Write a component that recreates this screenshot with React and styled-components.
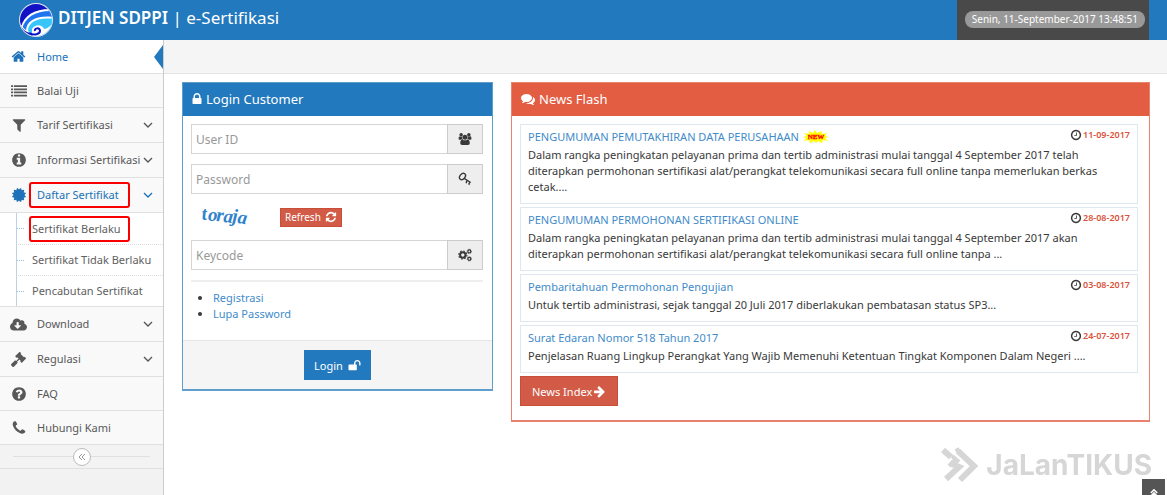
import React from 'react';
import styled, { createGlobalStyle } from 'styled-components';
import { FaCloudDownloadAlt, FaGavel } from 'react-icons/fa';

const GlobalStyle = createGlobalStyle`
  *,
  *::before,
  *::after {
    box-sizing: border-box;
  }

  body {
    margin: 0;
    background: #fff;
    color: #393939;
    font-family: 'Noto Sans', 'Open Sans', sans-serif;
    font-size: 11px;
    line-height: 16px;
  }

  input, button {
    font-family: inherit;
  }

  a {
    text-decoration: none;
  }
`;

const circle = 'M1664 896q0 209-103 385.5t-279.5 279.5-385.5 103-385.5-103-279.5-279.5-103-385.5 103-385.5 279.5-279.5 385.5-103 385.5 103 279.5 279.5 103 385.5z';

const paths = {
  home: 'M1472 992v480q0 26-19 45t-45 19h-384v-384h-256v384h-384q-26 0-45-19t-19-45v-480q0-1 .5-3t.5-3l575-474 575 474q1 2 1 6zm223-69l-62 74q-8 9-21 11h-3q-13 0-21-7l-692-577-692 577q-12 8-24 7-13-2-21-11l-62-74q-8-10-7-23.5t11-21.5l719-599q32-26 76-26t76 26l244 204v-195q0-14 9-23t23-9h192q14 0 23 9t9 23v408l219 182q10 8 11 21.5t-7 23.5z',
  list: 'M0 256h224v192H0zM320 256h1472v192H320zM0 608h224v192H0zM320 608h1472v192H320zM0 960h224v192H0zM320 960h1472v192H320zM0 1312h224v192H0zM320 1312h1472v192H320z',
  filter: 'M1595 295q17 41-14 70l-493 493v742q0 42-39 59-13 5-25 5-27 0-45-19l-256-256q-19-19-19-45v-486l-493-493q-31-29-14-70 17-39 59-39h1280q42 0 59 39z',
  info: `M1152 1376v-160q0-14-9-23t-23-9h-96v-512q0-14-9-23t-23-9h-320q-14 0-23 9t-9 23v160q0 14 9 23t23 9h96v320h-96q-14 0-23 9t-9 23v160q0 14 9 23t23 9h448q14 0 23-9t9-23zm-128-896v-160q0-14-9-23t-23-9h-192q-14 0-23 9t-9 23v160q0 14 9 23t23 9h192q14 0 23-9t9-23z${circle}`,
  certificate: 'M1504 896l138 135q30 28 20 70-12 41-52 51l-188 48 53 186q12 41-19 70-29 31-70 19l-186-53-48 188q-10 40-51 52-12 2-19 2-31 0-51-22l-135-138-135 138q-28 30-70 20-41-11-51-52l-48-188-186 53q-41 12-70-19-31-29-19-70l53-186-188-48q-40-10-52-51-10-42 20-70l138-135-138-135q-30-28-20-70 12-41 52-51l188-48-53-186q-12-41 19-70 29-31 70-19l186 53 48-188q10-41 51-51 41-12 70 19l135 139 135-139q29-30 70-19 41 10 51 51l48 188 186-53q41-12 70 19 31 29 19 70l-53 186 188 48q40 10 52 51 10 42-20 70z',
  question: `M1024 1376v-192q0-14-9-23t-23-9h-192q-14 0-23 9t-9 23v192q0 14 9 23t23 9h192q14 0 23-9t9-23zm256-672q0-88-55.5-163t-138.5-116-170-41q-243 0-371 213-15 24 8 42l132 100q7 6 19 6 16 0 25-12 53-68 86-92 34-24 86-24 48 0 85.5 26t37.5 59q0 38-20 61t-68 45q-63 28-115.5 86.5t-52.5 125.5v36q0 14 9 23t23 9h192q14 0 23-9t9-23q0-19 21.5-49.5t54.5-49.5q32-18 49-28.5t46-35 44.5-48 28-60.5 12.5-81z${circle}`,
  phone: 'M1600 1240q0 27-10 70.5t-21 68.5q-21 50-122 106-94 51-186 51-27 0-52.5-3.5t-57.5-12.5-47.5-14.5-55.5-20.5-49-18q-98-35-175-83-128-79-264.5-215.5t-215.5-264.5q-48-77-83-175-3-9-18-49t-20.5-55.5-14.5-47.5-12.5-57.5-3.5-52.5q0-92 51-186 56-101 106-122 25-11 68.5-21t70.5-10q14 0 21 3 18 6 53 76 11 19 30 54t35 63.5 31 53.5q3 4 17.5 25t21.5 35.5 7 28.5q0 20-28.5 50t-62 55-62 53-28.5 46q0 9 5 22.5t8.5 20.5 14 24 11.5 19q76 137 174 235t235 174q2 1 19 11.5t24 14 20.5 8.5 22.5 5q18 0 46-28.5t53-62 55-62 50-28.5q14 0 28.5 7t35.5 21.5 25 17.5q25 15 53.5 31t63.5 35 54 30q70 35 76 53 3 7 3 21z',
  lock: 'M640 768h512v-192q0-106-75-181t-181-75-181 75-75 181v192zm832 96v576q0 40-28 68t-68 28h-960q-40 0-68-28t-28-68v-576q0-40 28-68t68-28h32v-192q0-184 132-316t316-132 316 132 132 316v192h32q40 0 68 28t28 68z',
  unlock: 'M1728 576v256q0 26-19 45t-45 19h-64q-26 0-45-19t-19-45v-256q0-106-75-181t-181-75-181 75-75 181v192h96q40 0 68 28t28 68v576q0 40-28 68t-68 28h-960q-40 0-68-28t-28-68v-576q0-40 28-68t68-28h672v-192q0-185 131.5-316.5t316.5-131.5 316.5 131.5 131.5 316.5z',
  comments: 'M1408 768q0 139-94 257t-256.5 186.5-353.5 68.5q-86 0-176-16-124 88-278 128-36 9-86 16h-3q-11 0-20.5-8t-11.5-21q-1-3-1-6.5t.5-6.5 2-6l2.5-5t3.5-5.5 4-5 4.5-5 4-4.5q5-6 23-25t26-29.5 22.5-29 25-38.5 20.5-44q-124-72-195-177t-71-224q0-139 94-257t256.5-186.5 353.5-68.5 353.5 68.5 256.5 186.5 94 257zm384 256q0 120-71 224.5t-195 176.5q10 24 20.5 44t25 38.5 22.5 29 26 29.5 23 25q1 1 4 4.5t4.5 5 4 5 3.5 5.5l2.5 5t2 6 .5 6.5-1 6.5q-3 14-13 22t-22 7q-50-7-86-16-154-40-278-128-90 16-176 16-271 0-472-132 58 4 88 4 161 0 309-45t264-129q125-92 192-212t67-254q0-77-23-152 129 71 204 178t75 230z',
  refresh: 'M1639 1056q0 5-1 7-64 268-268 434.5t-478 166.5q-146 0-282.5-55t-243.5-157l-129 129q-19 19-45 19t-45-19-19-45v-448q0-26 19-45t45-19h448q26 0 45 19t19 45-19 45l-137 137q71 66 161 102t187 36q134 0 250-65t186-179q11-17 53-117 8-23 30-23h192q13 0 22.5 9.5t9.5 22.5zm25-800v448q0 26-19 45t-45 19h-448q-26 0-45-19t-19-45 19-45l138-138q-148-137-349-137-134 0-250 65t-186 179q-11 17-53 117-8 23-30 23h-199q-13 0-22.5-9.5t-9.5-22.5v-7q65-268 270-434.5t480-166.5q146 0 284 55.5t245 156.5l130-129q19-19 45-19t45 19 19 45z',
  clock: `M1024 544v448q0 14-9 23t-23 9h-320q-14 0-23-9t-9-23v-64q0-14 9-23t23-9h224v-352q0-14 9-23t23-9h64q14 0 23 9t9 23zm416 352q0-148-73-273t-198-198-273-73-273 73-198 198-73 273 73 273 198 198 273 73 273-73 198-198 73-273z${circle}`,
  arrow: 'M1600 960q0 54-37 91l-651 651q-39 37-91 37-51 0-90-37l-75-75q-38-38-38-91t38-91l293-293h-704q-52 0-84.5-37.5t-32.5-90.5v-128q0-53 32.5-90.5t84.5-37.5h704l-293-294q-38-36-38-90t38-90l75-75q38-38 90-38 53 0 91 38l651 651q37 35 37 90z',
  group: 'M657 896q-162 5-265 128h-134q-82 0-138-40.5t-56-118.5q0-353 124-353 6 0 43.5 21t97.5 42.5 119 21.5q67 0 133-23-5 37-5 66 0 159 81 288zm1071 637q0 120-73 189.5t-194 69.5h-874q-121 0-194-69.5t-73-189.5q0-53 3.5-103.5t14-109 26.5-108.5 43-97.5 62-81 85.5-53.5 111.5-20q10 0 43 21.5t73 48 107 48 135 21.5 135-21.5 107-48 73-48 43-21.5q61 0 111.5 20t85.5 53.5 62 81 43 97.5 26.5 108.5 14 109 3.5 103.5zm-1024-1277q0 106-75 181t-181 75-181-75-75-181 75-181 181-75 181 75 75 181zm704 384q0 159-112.5 271.5t-271.5 112.5-271.5-112.5-112.5-271.5 112.5-271.5 271.5-112.5 271.5 112.5 112.5 271.5zm576 225q0 78-56 118.5t-138 40.5h-134q-103-123-265-128 81-129 81-288 0-29-5-66 66 23 133 23 59 0 119-21.5t97.5-42.5 43.5-21q124 0 124 353zm-128-609q0 106-75 181t-181 75-181-75-75-181 75-181 181-75 181 75 75 181z',
};

const Icon = ({ name, size = 14, width = size, box = '0 0 1792 1792' }) => (
  <svg width={width} height={size} viewBox={box} fill="currentColor" fillRule="evenodd" aria-hidden="true">
    <path d={paths[name]} />
  </svg>
);

const KeyIcon = () => (
  <svg width="14" height="14" viewBox="0 0 14 14" fill="none" stroke="currentColor" aria-hidden="true">
    <ellipse cx="4.5" cy="4.5" rx="3.5" ry="2.5" transform="rotate(-50 4.5 4.5)" strokeWidth="1.4" />
    <path d="M5.8 6.2l6.8 4.3" strokeWidth="1.4" />
    <path d="M9.4 8.4l-1.5 2.3M12 10.1l-1.4 2.3M8 10.4l1 .6M10.6 12l1 .6" strokeWidth="1.3" />
  </svg>
);

const CogsIcon = () => (
  <svg width="14" height="14" viewBox="0 0 14 14" fill="none" stroke="currentColor" aria-hidden="true">
    <circle cx="4.8" cy="7" r="2.7" strokeWidth="2" />
    <circle cx="4.8" cy="7" r="4.1" strokeWidth="1.1" strokeDasharray="1.6 1.62" />
    <circle cx="11.3" cy="3.4" r="1.5" strokeWidth="1.3" />
    <circle cx="11.3" cy="10.8" r="1.5" strokeWidth="1.3" />
    <circle cx="11.3" cy="3.4" r="2.3" strokeWidth="0.6" strokeDasharray="0.9 0.9" />
    <circle cx="11.3" cy="10.8" r="2.3" strokeWidth="0.6" strokeDasharray="0.9 0.9" />
  </svg>
);

const Chevron = () => (
  <svg width="10" height="6" viewBox="0 0 10 6" fill="none" stroke="currentColor" strokeWidth="1.4" aria-hidden="true">
    <path d="M1 1l4 4 4-4" />
  </svg>
);

const Logo = () => (
  <svg width="36" height="36" viewBox="0 0 36 36" aria-hidden="true">
    <defs>
      <clipPath id="globe">
        <circle cx="18" cy="18" r="16" />
      </clipPath>
    </defs>
    <circle cx="18" cy="18" r="17" fill="#dfe9f5" />
    <g clipPath="url(#globe)">
      <rect width="36" height="36" fill="#1012c4" />
      <path d="M3 25C6 13 17 6 36 7v29H3z" fill="#fff" />
      <path d="M4 27C7 15 18 8 36 9v27H4z" fill="#1f74f0" />
      <path d="M8 29c0-10 10-16 28-14v21H8z" fill="#fff" />
      <path d="M10 29c0-9 10-14 26-12v19H10z" fill="#38c6fa" />
      <path d="M14 27c3-5 10-5 12 0 4 0 6-3 10-7v16H14z" fill="#fff" />
      <path d="M2 21c3 5 6 8 10 9l2 6H2z" fill="#fff" />
      <path d="M2 23c3 5 7 8 12 8l1 5H2z" fill="#1012c4" />
      <path d="M11 31c5 3 11 1 11-2 0-4-6-3-5 0" fill="none" stroke="#1012c4" strokeWidth="2" />
    </g>
  </svg>
);

const NewBadge = () => (
  <svg width="26" height="14" viewBox="0 0 26 14" role="img" aria-label="New">
    <path d="M0 7l4-1-3-3 5 1V1l4 2 2-3 2 3 4-2 1 3 5-1-2 3 4 1-4 1 3 3-5-1-1 3-4-2-2 2-2-2-4 2-1-3-5 1 2-3z" fill="#ff0" />
    <text x="13" y="9" textAnchor="middle" fontSize="7" fontWeight="bold" fontFamily="Liberation Serif, serif" fill="#f00" stroke="#f00" strokeWidth="0.3">NEW</text>
  </svg>
);

const menu = [
  { label: 'Home', icon: <Icon name="home" size={15} />, active: true },
  { label: 'Balai Uji', icon: <Icon name="list" size={16} /> },
  { label: 'Tarif Sertifikasi', icon: <Icon name="filter" size={16} />, expand: true },
  { label: 'Informasi Sertifikasi', icon: <Icon name="info" size={16} />, expand: true },
  {
    label: 'Daftar Sertifikat',
    icon: <Icon name="certificate" size={16} />,
    expand: true,
    open: true,
    marked: true,
    children: [
      { label: 'Sertifikat Berlaku', marked: true },
      { label: 'Sertifikat Tidak Berlaku' },
      { label: 'Pencabutan Sertifikat' },
    ],
  },
  { label: 'Download', icon: <FaCloudDownloadAlt size={17} />, expand: true },
  { label: 'Regulasi', icon: <FaGavel size={15} />, expand: true },
  { label: 'FAQ', icon: <Icon name="question" size={16} /> },
  { label: 'Hubungi Kami', icon: <Icon name="phone" size={16} /> },
];

const news = [
  {
    title: 'PENGUMUMAN PEMUTAKHIRAN DATA PERUSAHAAN',
    date: '11-09-2017',
    isNew: true,
    text: 'Dalam rangka peningkatan pelayanan prima dan tertib administrasi mulai tanggal 4 September 2017 telah diterapkan permohonan sertifikasi alat/perangkat telekomunikasi secara full online tanpa memerlukan berkas cetak....',
  },
  {
    title: 'PENGUMUMAN PERMOHONAN SERTIFIKASI ONLINE',
    date: '28-08-2017',
    text: 'Dalam rangka peningkatan pelayanan prima dan tertib administrasi mulai tanggal 4 September 2017 akan diterapkan permohonan sertifikasi alat/perangkat telekomunikasi secara full online tanpa ...',
  },
  {
    title: 'Pembaritahuan Permohonan Pengujian',
    date: '03-08-2017',
    text: 'Untuk tertib administrasi, sejak tanggal 20 Juli 2017 diberlakukan pembatasan status SP3...',
  },
  {
    title: 'Surat Edaran Nomor 518 Tahun 2017',
    date: '24-07-2017',
    text: 'Penjelasan Ruang Lingkup Perangkat Yang Wajib Memenuhi Ketentuan Tingkat Komponen Dalam Negeri ....',
  },
];

const App = () => {
  return (
    <>
      <GlobalStyle />
      <Header>
        <Brand href="#">
          <Logo />
          <span><strong>DITJEN SDPPI</strong> | e-Sertifikasi</span>
        </Brand>
        <ClockBox>
          <ClockPill>Senin, 11-September-2017 13:48:51</ClockPill>
        </ClockBox>
      </Header>
      <Layout>
        <Sidebar>
          <MenuList>
            {menu.map((item) => (
              <li key={item.label}>
                <MenuLink href="#" $active={item.active} $open={item.open} $expand={item.expand}>
                  <MenuIcon>{item.icon}</MenuIcon>
                  <MenuLabel>{item.marked ? <Marked $wide>{item.label}</Marked> : item.label}</MenuLabel>
                  {item.expand && <Chevron />}
                </MenuLink>
                {item.children && (
                  <SubMenu>
                    {item.children.map((child) => (
                      <SubItem key={child.label}>
                        <SubLink href="#">{child.marked ? <Marked>{child.label}</Marked> : child.label}</SubLink>
                      </SubItem>
                    ))}
                  </SubMenu>
                )}
              </li>
            ))}
          </MenuList>
          <Collapse>
            <CollapseButton type="button" aria-label="Collapse menu">
              <svg width="8" height="8" viewBox="0 0 8 8" fill="none" stroke="currentColor">
                <path d="M4 1L1 4l3 3M7 1L4 4l3 3" />
              </svg>
            </CollapseButton>
          </Collapse>
        </Sidebar>
        <Main>
          <Breadcrumbs />
          <Content>
            <Panel $edge="#5f9dcb">
              <PanelTitle $color="#2279bd">
                <Icon name="lock" size={14} width={10} box="256 0 1280 1792" />
                Login Customer
              </PanelTitle>
              <form onSubmit={(e) => e.preventDefault()}>
                <FormBody>
                  <InputGroup>
                    <Input type="text" placeholder="User ID" aria-label="User ID" />
                    <Addon><Icon name="group" size={12} width={14} box="0 0 2048 1792" /></Addon>
                  </InputGroup>
                  <InputGroup>
                    <Input type="password" placeholder="Password" aria-label="Password" />
                    <Addon><KeyIcon /></Addon>
                  </InputGroup>
                  <CaptchaRow>
                    <Captcha>
                      <svg width="60" height="26" viewBox="0 0 60 26" role="img" aria-label="toraja">
                        <text
                          x="11 17 25 32 41 46"
                          y="16 17 17 18 18 19"
                          rotate="-4 0 4 6 4 8"
                          fontFamily="Liberation Serif, serif"
                          fontStyle="italic"
                          fontWeight="bold"
                          fontSize="19"
                          fill="#2f82cc"
                        >
                          toraja
                        </text>
                      </svg>
                    </Captcha>
                    <RefreshButton type="button">
                      Refresh <Icon name="refresh" size={12} />
                    </RefreshButton>
                  </CaptchaRow>
                  <InputGroup>
                    <Input type="text" placeholder="Keycode" aria-label="Keycode" />
                    <Addon><CogsIcon /></Addon>
                  </InputGroup>
                  <Divider />
                  <Links>
                    <li><a href="#">Registrasi</a></li>
                    <li><a href="#">Lupa Password</a></li>
                  </Links>
                </FormBody>
                <FormFooter>
                  <LoginButton type="submit">
                    Login <Icon name="unlock" size={13} />
                  </LoginButton>
                </FormFooter>
              </form>
            </Panel>
            <Panel $edge="#e8826c">
              <PanelTitle $color="#e35d42">
                <Icon name="comments" size={14} />
                News Flash
              </PanelTitle>
              <NewsBody>
                {news.map((item) => (
                  <NewsItem key={item.title}>
                    <NewsHead>
                      <a href="#">{item.title}</a>
                      {item.isNew && <NewBadge />}
                      <NewsDate>
                        <Icon name="clock" size={12} />
                        <b>{item.date}</b>
                      </NewsDate>
                    </NewsHead>
                    <NewsText>{item.text}</NewsText>
                  </NewsItem>
                ))}
                <IndexButton type="button">
                  News Index <Icon name="arrow" size={13} />
                </IndexButton>
              </NewsBody>
            </Panel>
          </Content>
        </Main>
      </Layout>
      <Watermark>
        <svg width="38" height="36" viewBox="0 0 38 36" fill="none" stroke="currentColor" strokeWidth="6" aria-hidden="true">
          <path d="M2 3l8 7M9 16l9 4L5 32" />
          <path d="M15 5l4-2M17 4l16 15-14 14" />
          <path d="M8 19l8-8M11 9l7 6" strokeWidth="4" />
        </svg>
        <span>JaLanTIKUS</span>
      </Watermark>
      <ScrollUp type="button" aria-label="Scroll to top">
        <svg width="8" height="8" viewBox="0 0 10 10" fill="none" stroke="currentColor" strokeWidth="2">
          <path d="M1 5l4-4 4 4M1 9l4-4 4 4" />
        </svg>
      </ScrollUp>
    </>
  );
};

// header
const Header = styled.header`
  display: flex;
  justify-content: space-between;
  height: 40px;
  padding: 0 18px;
  background-color: #2279bd;
`;

const Brand = styled.a`
  display: flex;
  align-items: center;
  gap: 4px;
  color: #fff;
  font-size: 17px;
  line-height: 36px;

  > span {
    padding-bottom: 4px;
  }

  strong {
    font-weight: 600;
  }
`;

const ClockBox = styled.div`
  display: flex;
  align-items: center;
  padding: 0 4px 2px 8px;
  background-color: #494949;
`;

const ClockPill = styled.span`
  padding: 0 7px;
  border-radius: 8px;
  background-color: #999;
  color: #fff;
  font-size: 10px;
  line-height: 17px;
`;

// sidebar
const Layout = styled.div`
  display: flex;
  min-height: calc(100vh - 40px);
`;

const Sidebar = styled.nav`
  flex: 0 0 164px;
  min-width: 0;
  border-right: 1px solid #ccc;
  background-color: #f2f2f2;
`;

const MenuList = styled.ul`
  margin: 0;
  padding: 0;
  list-style: none;
`;

const MenuLink = styled.a`
  position: relative;
  display: flex;
  align-items: center;
  height: ${({ $expand }) => ($expand ? '35px' : '34px')};
  padding-right: 10px;
  border-bottom: 1px solid #e0e0e0;
  background-color: ${({ $active }) => ($active ? '#fff' : '#f9f9f9')};
  color: ${({ $active, $open }) => ($active || $open ? '#2072b8' : '#585858')};

  /* arrow that points at the current page */
  &::after {
    content: '';
    display: ${({ $active }) => ($active ? 'block' : 'none')};
    position: absolute;
    top: 5px;
    right: 0;
    border: 12px solid transparent;
    border-left-width: 0;
    border-right: 9px solid #2279bd;
  }
`;

const MenuIcon = styled.span`
  display: flex;
  justify-content: center;
  width: 37px;
`;

const MenuLabel = styled.span`
  flex: 1;
  min-width: 0;
  white-space: nowrap;
`;

const Marked = styled.span`
  position: relative;
  display: inline-block;

  &::after {
    content: '';
    position: absolute;
    top: -5px;
    left: ${({ $wide }) => ($wide ? '-8px' : '-3px')};
    width: 101px;
    height: 26px;
    border: 2px solid #f80000;
    border-radius: 3px;
  }
`;

const SubMenu = styled.ul`
  margin: 0;
  padding: 0 0 0 16px;
  border-bottom: 1px solid #e0e0e0;
  background-color: #fff;
  list-style: none;
`;

const SubItem = styled.li`
  display: flex;
  align-items: center;
  height: 31px;
  border-left: 1px solid #bcd1e4;

  & + & {
    border-top: 1px dotted #ddd;
  }

  &::before {
    content: '';
    width: 7px;
    border-top: 1px dotted #9dbdd6;
  }
`;

const SubLink = styled.a`
  padding-left: 8px;
  color: #616161;
  white-space: nowrap;
`;

const Collapse = styled.div`
  display: flex;
  align-items: center;
  height: 24px;
  padding: 0 13px;
  border-bottom: 1px solid #e0e0e0;
  background-color: #f3f3f3;

  &::before,
  &::after {
    content: '';
    flex: 1;
    border-top: 1px solid #e0e0e0;
  }
`;

const CollapseButton = styled.button`
  display: flex;
  align-items: center;
  justify-content: center;
  width: 18px;
  height: 18px;
  padding: 0;
  border: 1px solid #bbb;
  border-radius: 50%;
  background-color: #fff;
  color: #999;
`;

// content
const Main = styled.main`
  flex: 1;
  min-width: 0;
`;

const Breadcrumbs = styled.div`
  height: 34px;
  border-bottom: 1px solid #e5e5e5;
  background-color: #f5f5f5;
`;

const Content = styled.div`
  display: grid;
  grid-template-columns: minmax(0, 311fr) minmax(0, 639fr);
  align-items: start;
  gap: 18px;
  padding: 8px 17px 8px 18px;
`;

const Panel = styled.section`
  border: 1px solid ${({ $edge }) => $edge};
  border-bottom-width: 2px;
`;

const PanelTitle = styled.h2`
  display: flex;
  align-items: center;
  gap: 4px;
  height: 33px;
  margin: 0;
  padding: 0 9px 2px;
  background-color: ${({ $color }) => $color};
  color: #fff;
  font-size: 13px;
  font-weight: 400;
`;

const FormBody = styled.div`
  padding: 8px 9px 18px 8px;
`;

const InputGroup = styled.div`
  display: flex;
  margin-bottom: 10px;
`;

const Input = styled.input`
  flex: 1;
  min-width: 0;
  height: 30px;
  padding: 0 4px;
  border: 1px solid #d5d5d5;
  border-right: 0;
  border-radius: 0;
  font-size: 12px;

  &::placeholder {
    color: #999;
  }
`;

const Addon = styled.span`
  display: flex;
  align-items: center;
  justify-content: center;
  width: 36px;
  border: 1px solid #ccc;
  background-color: #eee;
`;

const CaptchaRow = styled.div`
  display: flex;
  align-items: center;
  height: 26px;
  margin-bottom: 10px;
`;

const Captcha = styled.span`
  display: flex;
  width: 89px;
`;

const RefreshButton = styled.button`
  display: flex;
  align-items: center;
  gap: 4px;
  height: 19px;
  padding: 0 4px;
  border: 1px solid #c94e38;
  background-color: #d15b47;
  color: #fff;
  font-size: 10px;
`;

const Divider = styled.hr`
  height: 2px;
  margin: 0 0 8px;
  border: 0;
  background-color: #eee;
`;

const Links = styled.ul`
  margin: 0;
  padding-left: 22px;

  a {
    color: #428bca;
  }
`;

const FormFooter = styled.div`
  display: flex;
  justify-content: center;
  padding: 9px 0;
  border-top: 1px solid #e5e5e5;
  background-color: #f5f5f5;
`;

const LoginButton = styled.button`
  display: flex;
  align-items: center;
  gap: 5px;
  height: 30px;
  padding: 0 9px;
  border: 1px solid #2279bd;
  background-color: #2279bd;
  color: #fff;
  font-size: 11px;
`;

const NewsBody = styled.div`
  padding: 8px 11px 14px 8px;
`;

const NewsItem = styled.article`
  margin-bottom: 3px;
  padding: 2px 7px 8px;
  border: 1px solid #dfe7f1;
`;

const NewsHead = styled.div`
  display: flex;
  align-items: center;
  gap: 4px;
  height: 20px;

  a {
    color: #428bca;
  }
`;

const NewsDate = styled.span`
  display: flex;
  align-items: center;
  align-self: flex-start;
  gap: 1px;
  margin-left: auto;
  font-size: 9px;

  b {
    color: #d9533b;
    font-weight: 600;
  }
`;

const NewsText = styled.p`
  margin: 0;
`;

const IndexButton = styled.button`
  display: flex;
  align-items: center;
  gap: 1px;
  height: 30px;
  padding: 0 11px;
  border: 1px solid #c94e38;
  background-color: #d15b47;
  color: #fff;
  font-size: 11px;
`;

// overlays
const Watermark = styled.div`
  position: fixed;
  right: 15px;
  bottom: 12px;
  display: flex;
  align-items: center;
  gap: 7px;
  color: #d6d6d6;
  font-family: Inter, sans-serif;
  font-size: 28px;
  font-weight: 700;
  line-height: 36px;
`;

const ScrollUp = styled.button`
  position: fixed;
  right: 2px;
  bottom: 0;
  display: flex;
  justify-content: center;
  width: 23px;
  height: 16px;
  padding: 10px 0 0;
  overflow: hidden;
  border: 0;
  background-color: #555;
  color: #fff;
`;

export default App;
